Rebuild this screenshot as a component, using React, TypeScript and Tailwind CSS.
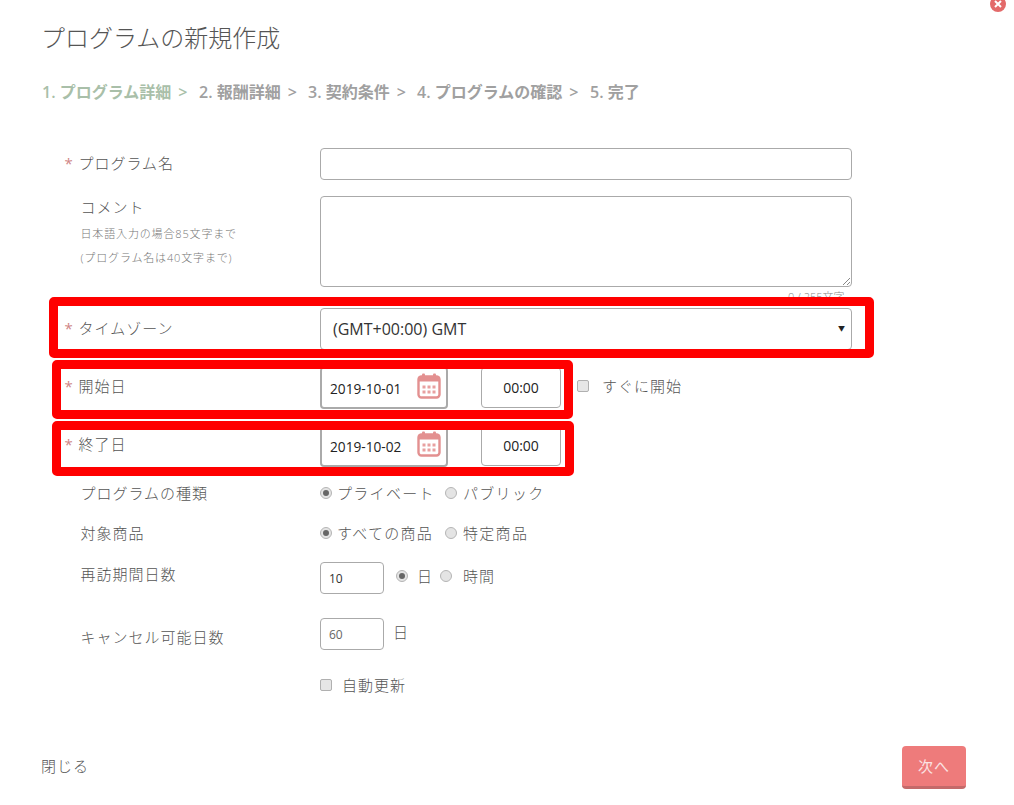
const jp = "font-['Open_Sans','Noto_Sans_CJK_JP',sans-serif]";

function Radio({ on }: { on?: boolean }) {
  return (
    <span className="flex h-3 w-3 shrink-0 items-center justify-center rounded-full border border-[#b5b5b5] bg-[#e4e4e4]">
      {on && <span className="h-1.5 w-1.5 rounded-full bg-[#666]" />}
    </span>
  );
}

function Check() {
  return <span className="block h-3 w-3 shrink-0 rounded-[2px] border border-[#b0b0b0] bg-[#e6e6e6]" />;
}

function Label({ text, required, className = "" }: { text: string; required?: boolean; className?: string }) {
  return (
    <div className={`flex w-[255.5px] shrink-0 text-[15px] font-light tracking-[1px] text-[#555] ${className}`}>
      {required ? <span className="w-[14px] font-normal text-[#d08585]">*</span> : <span className="w-4" />}
      <span>{text}</span>
    </div>
  );
}

function Calendar() {
  return (
    <svg width="24" height="26" viewBox="0 0 24 26" fill="none" className="mb-[8px] shrink-0">
      <rect x="1.5" y="3.5" width="21" height="21" rx="3" stroke="#e39090" strokeWidth="2.4" />
      <rect x="1.5" y="3.5" width="21" height="5" fill="#e39090" />
      <rect x="5" y="0.5" width="3" height="5" rx="1" fill="#e39090" />
      <rect x="16" y="0.5" width="3" height="5" rx="1" fill="#e39090" />
      {[5.5, 10.5, 15.5].map((x) =>
        [12.5, 17.5].map((y) => <rect key={`${x}-${y}`} x={x} y={y} width="3" height="3" fill="#e8a0a0" />)
      )}
    </svg>
  );
}

function DateRow({ label, date, extra, className }: { label: string; date: string; extra?: boolean; className: string }) {
  return (
    <div className={`flex h-[41px] ${className}`}>
      <Label text={label} required className="pt-[8px]" />
      <div className="flex h-[42px] w-[128px] items-center justify-between rounded-[4px] border border-[#aaa] border-b-2 border-l-2 border-r-2 pl-2 pr-[5px] pt-1 text-[13.7px] text-[#222]">
        <span>{date}</span>
        <Calendar />
      </div>
      <div className="ml-[33px] flex h-[41px] w-[80px] items-center justify-center rounded-[4px] border border-[#aaa] text-[14px] text-[#222]">
        00:00
      </div>
      {extra && (
        <div className="mb-[3px] ml-[16px] flex items-center text-[15px] font-light tracking-[1px] text-[#555]">
          <Check />
          <span className="ml-[13px]">すぐに開始</span>
        </div>
      )}
    </div>
  );
}

function Step({ text, active, className }: { text: string; active?: boolean; className: string }) {
  return (
    <span className={`flex ${active ? "text-[#a9bfa9]" : ""} ${className}`}>
      {text}
      <span className="ml-[7px]">&gt;</span>
    </span>
  );
}

function RadioRow({ label, a, b, className }: { label: string; a: string; b: string; className: string }) {
  return (
    <div className={`flex h-6 items-center ${className}`}>
      <Label text={label} />
      <div className="flex items-center text-[15px] font-light tracking-[1.3px] text-[#555]">
        <Radio on />
        <span className="ml-[5px] w-[108px]">{a}</span>
        <Radio />
        <span className="ml-[6px]">{b}</span>
      </div>
    </div>
  );
}

export default function App() {
  return (
    <div className={`relative h-[805px] w-[1014px] overflow-hidden bg-white ${jp}`}>
      <div className="absolute right-[8px] top-[-4px] flex h-4 w-4 items-center justify-center rounded-full bg-[#e36a6a] text-white">
        <svg width="8" height="8" viewBox="0 0 8 8"><path d="M1 1l6 6M7 1L1 7" stroke="#fff" strokeWidth="2" /></svg>
      </div>

      <h1 className="pl-[41px] pt-[21px] text-[24px] font-extralight leading-[34px] text-[#555]">プログラムの新規作成</h1>

      <div className="mt-[26px] flex pl-[42px] text-[16px] font-semibold leading-[22px] text-[#a0a0a0]">
        <Step active text="1. プログラム詳細" className="w-[157px]" />
        <Step text="2. 報酬詳細" className="w-[109px]" />
        <Step text="3. 契約条件" className="w-[109px]" />
        <Step text="4. プログラムの確認" className="w-[173px]" />
        <span>5. 完了</span>
      </div>

      <div className="pl-[64.5px]">
        <div className="mt-[45px] flex h-8">
          <Label text="プログラム名" required className="pt-1" />
          <div className="h-8 w-[532px] rounded-[4px] border border-[#aaa]" />
        </div>

        <div className="mt-4 flex h-[91px]">
          <div className="w-[255.5px] shrink-0 pl-4 font-light text-[#555]">
            <div className="text-[15px] leading-[22px] tracking-[1px]">コメント</div>
            <div className="mt-[4px] text-[11px] leading-[24px] tracking-[0.85px] text-[#777]">日本語入力の場合85文字まで</div>
            <div className="text-[11px] leading-[24px] tracking-[0.85px] text-[#777]">(プログラム名は40文字まで)</div>
          </div>
          <div className="relative h-[91px] w-[532px] rounded-[4px] border border-[#aaa]">
            <svg width="10" height="10" viewBox="0 0 10 10" className="absolute bottom-0 right-0">
              <path d="M9 2L2 9M9 6L6 9" stroke="#888" strokeWidth="1" />
            </svg>
          </div>
        </div>

        <div className="flex h-[21px] w-[780px] justify-end pt-[2px] text-[11px] font-light text-[#888]">0 / 255文字</div>

        <div className="flex h-[42px]">
          <Label text="タイムゾーン" required className="pt-[9px]" />
          <div className="flex h-[42px] w-[532px] items-center justify-between rounded-[4px] border border-[#aaa] pl-[12px] pr-[6px] text-[16px] text-[#333]">
            <span>(GMT+00:00) GMT</span>
            <span className="text-[7px] text-[#222]">▼</span>
          </div>
        </div>

        <DateRow label="開始日" date="2019-10-01" extra className="mt-[17px]" />
        <DateRow label="終了日" date="2019-10-02" className="mt-[17px]" />

        <RadioRow label="プログラムの種類" a="プライベート" b="パブリック" className="mt-[15px]" />
        <RadioRow label="対象商品" a="すべての商品" b="特定商品" className="mt-[16px]" />

        <div className="mt-[17px] flex h-8">
          <Label text="再訪期間日数" className="pt-[1px]" />
          <div className="flex h-8 w-16 items-center rounded-[4px] border border-[#aaa] pl-2 pt-[2px] text-[12px] text-[#333]">10</div>
          <div className="mb-[4px] ml-[12px] flex items-center text-[15px] font-light tracking-[1px] text-[#555]">
            <Radio on />
            <span className="ml-[9px]">日</span>
            <span className="ml-[7px]"><Radio /></span>
            <span className="ml-[11px]">時間</span>
          </div>
        </div>

        <div className="mt-6 flex h-8">
          <Label text="キャンセル可能日数" className="pt-[8px]" />
          <div className="flex h-8 w-16 items-center rounded-[4px] border border-[#aaa] pl-2 pt-[2px] text-[12px] text-[#666]">60</div>
          <span className="ml-[9px] pt-[3px] text-[15px] font-light text-[#555]">日</span>
        </div>

        <div className="ml-[255.5px] mt-[23px] flex h-6 items-center text-[15px] font-light tracking-[1px] text-[#555]">
          <Check />
          <span className="ml-[10px]">自動更新</span>
        </div>
      </div>

      <div className="mt-[49px] flex items-center justify-between pl-[41px] pr-[48px]">
        <span className="mb-[2px] text-[15px] font-light tracking-[1px] text-[#555]">閉じる</span>
        <button className="h-[43px] w-[64px] rounded-[4px] border-b-[3px] border-[#c46a6a] bg-[#ee7b7b] text-[15px] tracking-[1px] text-[#fbe3e3]">次へ</button>
      </div>

      <div className="absolute left-[49px] top-[297px] h-[61px] w-[825px] rounded-[5px] border-[9px] border-[#ff0000]" />
      <div className="absolute left-[52px] top-[360px] h-[59px] w-[521px] rounded-[5px] border-[9px] border-[#ff0000]" />
      <div className="absolute left-[52px] top-[421px] h-[55px] w-[522px] rounded-[5px] border-[9px] border-[#ff0000]" />
    </div>
  );
}
